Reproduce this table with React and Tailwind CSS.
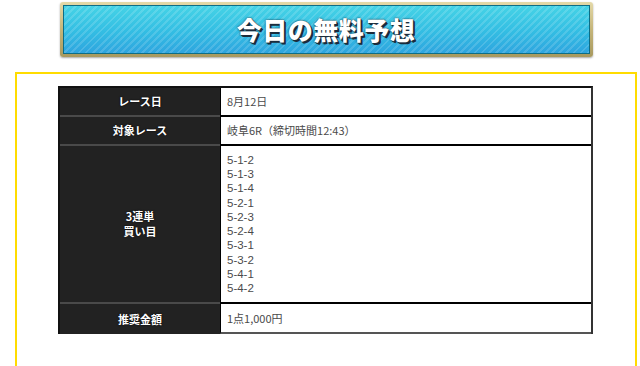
import React from 'react';

const jp = '[font-family:"Noto_Sans_CJK_JP","Noto_Sans",sans-serif]';

const picks = ['5-1-2', '5-1-3', '5-1-4', '5-2-1', '5-2-3', '5-2-4', '5-3-1', '5-3-2', '5-4-1', '5-4-2'];

function Row({ label, children, h, last }) {
  return (
    <div className={`flex ${h}`}>
      <div
        className={`w-[160px] shrink-0 bg-[#222222] flex items-center justify-center text-center text-white text-[11px] font-bold leading-[15px] [text-shadow:0_0_2px_#000] ${
          last ? '' : 'border-b-2 border-[#4a4a4a]'
        }`}
      >
        {label}
      </div>
      <div
        className={`flex-1 bg-white border-l border-black text-[11px] text-[#4a4a4a] pl-[6px] ${
          last ? 'border-b-2 border-b-[#555]' : 'border-b-2 border-b-black'
        }`}
      >
        {children}
      </div>
    </div>
  );
}

export default function App() {
  return (
    <div className={`w-[640px] h-[366px] overflow-hidden bg-white ${jp}`}>
      <div className="ml-[15px] w-[622px]">
        {/* heading plate */}
        <div className="mx-auto mt-[2px] w-[533px] h-[55px] rounded-[3px] p-[3px] bg-[linear-gradient(180deg,#e4d9a8,#c5b57a_50%,#a8995e)] shadow-[0_1px_2px_rgba(0,0,0,0.35)]">
          <div className="h-full border border-[#0d6d86] flex items-center justify-center bg-[repeating-linear-gradient(-45deg,rgba(255,255,255,0.14)_0_2px,rgba(255,255,255,0)_2px_5px),linear-gradient(180deg,#45d3e6,#33bde3_55%,#2ea5df)]">
            <span className="text-white text-[25px] font-black tracking-[0.5px] leading-none [text-shadow:2px_2px_0_#1b2c3c,1px_1px_0_#1b2c3c,0_0_2px_#0b1a28]">
              今日の無料予想
            </span>
          </div>
        </div>

        {/* yellow frame */}
        <div className="mt-[15px] h-[400px] border-2 border-[#ffdc00] px-[41px] pt-[12px]">
          <div className="w-[535px] border-l-2 border-l-[#111] border-r-2 border-r-[#333] border-t-2 border-t-[#111]">
            <Row label="レース日" h="h-[29px]">
              <div className="h-full flex items-center">8月12日</div>
            </Row>
            <Row label="対象レース" h="h-[29px]">
              <div className="h-full flex items-center">岐阜6R（締切時間12:43）</div>
            </Row>
            <Row
              label={
                <span>
                  3連単
                  <br />
                  買い目
                </span>
              }
              h="h-[158px]"
            >
              <div className="h-full flex flex-col justify-center gap-[0.3px] [font-family:'Liberation_Sans',sans-serif] text-[11.5px]">
                {picks.map((p) => (
                  <div key={p} className="h-[14px] leading-[14px]">
                    {p}
                  </div>
                ))}
              </div>
            </Row>
            <Row label="推奨金額" h="h-[30px]" last>
              <div className="h-full flex items-center">1点1,000円</div>
            </Row>
          </div>
        </div>
      </div>
    </div>
  );
}
